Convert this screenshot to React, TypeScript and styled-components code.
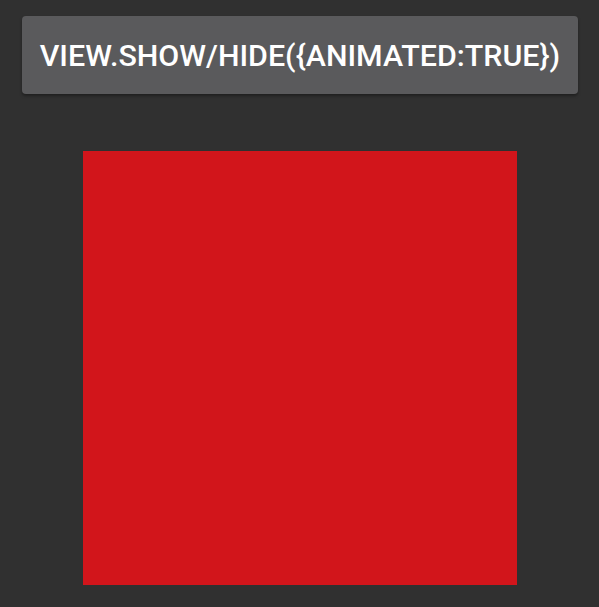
import styled, { createGlobalStyle } from 'styled-components';

const GlobalStyle = createGlobalStyle`
  html, body {
    margin: 0;
    padding: 0;
    background-color: #303030;
  }
`;

const Screen = styled.div`
  display: flex;
  flex-direction: column;
  align-items: center;
  width: 599px;
  height: 607px;
  padding-top: 16px;
  box-sizing: border-box;
  background-color: #303030;
  font-family: Roboto, "Noto Sans", sans-serif;
`;

const Button = styled.button`
  width: 556px;
  height: 78px;
  margin-left: 1px;
  padding: 0;
  border: none;
  border-radius: 4px;
  background-color: #5a5a5c;
  box-shadow: 0 2px 3px rgba(0, 0, 0, 0.35);
  color: #ffffff;
  font-family: inherit;
  font-size: 30.4px;
  font-weight: 500;
  text-transform: uppercase;
  cursor: pointer;
`;

interface BoxProps {
  color: string;
  size: number;
}

const Square = styled.div<BoxProps>`
  margin-top: 57px;
  width: ${(p) => p.size}px;
  height: ${(p) => p.size}px;
  background-color: ${(p) => p.color};
`;

export default function App() {
  return (
    <>
      <GlobalStyle />
      <Screen>
        <Button>view.show/hide({'{'}animated:true{'}'})</Button>
        <Square color="#d2151b" size={434} />
      </Screen>
    </>
  );
}
